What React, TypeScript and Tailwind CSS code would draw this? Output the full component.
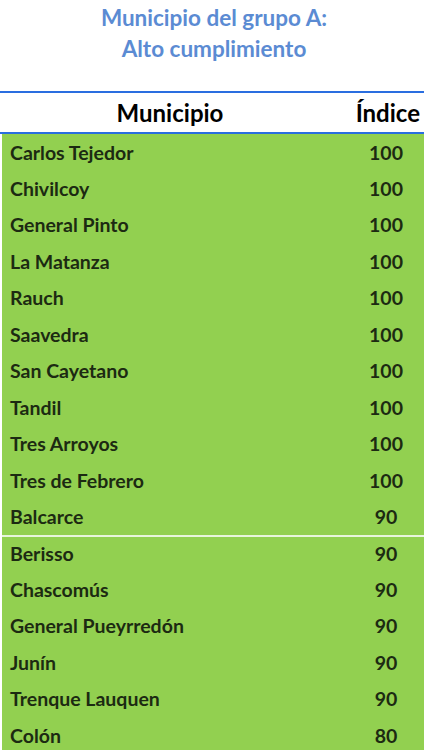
import React from "react";

const rows: [string, string][] = [
  ["Carlos Tejedor", "100"],
  ["Chivilcoy", "100"],
  ["General Pinto", "100"],
  ["La Matanza", "100"],
  ["Rauch", "100"],
  ["Saavedra", "100"],
  ["San Cayetano", "100"],
  ["Tandil", "100"],
  ["Tres Arroyos", "100"],
  ["Tres de Febrero", "100"],
  ["Balcarce", "90"],
  ["Berisso", "90"],
  ["Chascomús", "90"],
  ["General Pueyrredón", "90"],
  ["Junín", "90"],
  ["Trenque Lauquen", "90"],
  ["Colón", "80"],
];

export default function App() {
  return (
    <div
      className="w-[428px] h-[750px] overflow-hidden bg-white"
      style={{ fontFamily: "Lato, 'Open Sans', sans-serif" }}
    >
      <div className="pt-[2px] h-[91px] text-center text-[22.5px] leading-[31px] font-bold text-[#5b8bd3]">
        <div>Municipio del grupo A:</div>
        <div>Alto cumplimiento</div>
      </div>
      <div className="w-[424px]">
        <div className="h-[2px] bg-[#2a6ee0]" />
        <div className="flex h-[39px] items-center text-[24px] font-bold text-black">
          <div className="w-[340px] text-center">Municipio</div>
          <div className="flex-1 pr-[4px] text-right">Índice</div>
        </div>
        <div className="h-[2px] bg-[#2a6ee0]" />
        <div className="ml-[2px] bg-[#92d050]">
          {rows.map(([name, val], i) => (
            <div
              key={name}
              className={`flex h-[36.45px] items-center text-[19.5px] font-bold text-[#1c2a12] ${
                i === 11 ? "border-t-2 border-[#e8f5dc]" : ""
              }`}
            >
              <div className="flex-1 pl-[8px]">{name}</div>
              <div className="w-[60px] mr-[8px] text-center">{val}</div>
            </div>
          ))}
        </div>
      </div>
    </div>
  );
}
